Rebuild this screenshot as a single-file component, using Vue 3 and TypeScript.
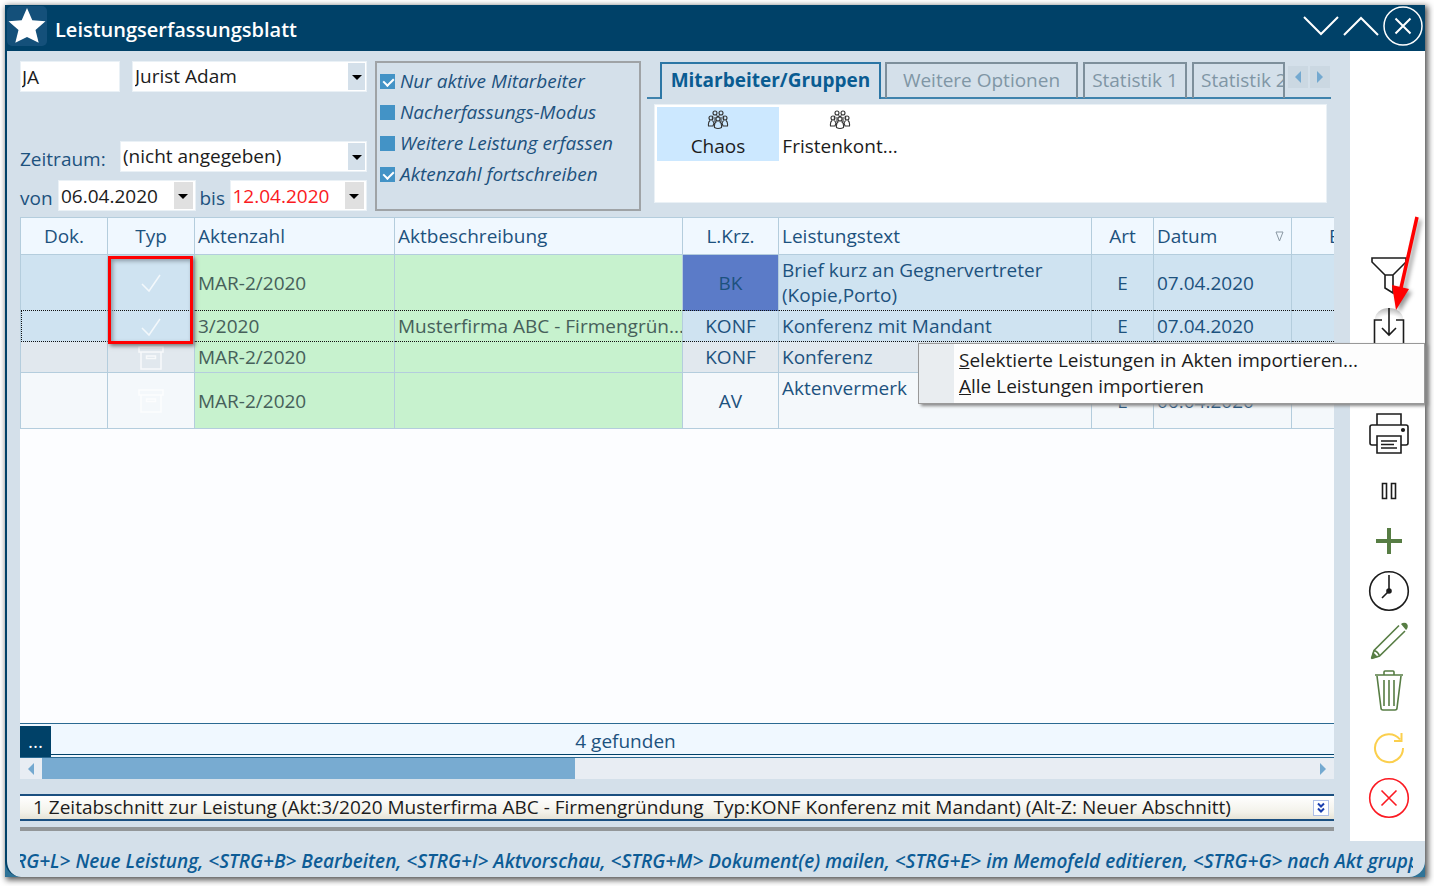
<script setup lang="ts">
import { ref } from 'vue'

interface Option { label: string; on: boolean }
interface Row {
  state: 'selected' | 'focused' | 'alt' | 'plain'
  typ: 'check' | 'box'
  akt: string
  text: string
  desc: string
  krz: string
  date: string
}

const kuerzel = ref('JA')
const person = ref('Jurist Adam')
const zeitraum = ref('(nicht angegeben)')
const von = ref('06.04.2020')
const bis = ref('12.04.2020')

const options = ref<Option[]>([
  { label: 'Nur aktive Mitarbeiter', on: true },
  { label: 'Nacherfassungs-Modus', on: false },
  { label: 'Weitere Leistung erfassen', on: false },
  { label: 'Aktenzahl fortschreiben', on: true },
])

const groups = ['Chaos', 'Fristenkont...']
const activeGroup = ref('Chaos')

const rows: Row[] = [
  { state: 'selected', typ: 'check', akt: 'MAR-2/2020', desc: '', krz: 'BK', text: 'Brief kurz an Gegnervertreter (Kopie,Porto)', date: '07.04.2020' },
  { state: 'focused', typ: 'check', akt: '3/2020', desc: 'Musterfirma ABC - Firmengrün...', krz: 'KONF', text: 'Konferenz mit Mandant', date: '07.04.2020' },
  { state: 'alt', typ: 'box', akt: 'MAR-2/2020', desc: '', krz: 'KONF', text: 'Konferenz', date: '06.04.2020' },
  { state: 'plain', typ: 'box', akt: 'MAR-2/2020', desc: '', krz: 'AV', text: 'Aktenvermerk', date: '06.04.2020' },
]
</script>

<template>
  <div class="window">
    <header class="titlebar">
      <span class="logo">
        <svg viewBox="0 0 40 40" width="40" height="40" aria-hidden="true">
          <path d="M20 2l5.3 12.2 13.2 1.1-10 8.7 3.2 12.8L20 31l-11.7 5.8L11.500 24l-10-8.700 13.200-1.100z" fill="#fff" />
        </svg>
      </span>
      <h1>Leistungserfassungsblatt</h1>
      <div class="win-buttons">
        <button type="button" aria-label="Minimieren">
          <svg viewBox="0 0 36 20" width="36" height="20"><path d="M1 1l17 17L35 1" /></svg>
        </button>
        <button type="button" aria-label="Maximieren">
          <svg viewBox="0 0 36 20" width="36" height="20"><path d="M1 19L18 2l17 17" /></svg>
        </button>
        <button type="button" aria-label="Schließen">
          <svg viewBox="0 0 40 40" width="40" height="40"><circle cx="20" cy="20" r="19" /><path d="M12.500 12.500l15 15M27.500 12.500l-15 15" /></svg>
        </button>
      </div>
    </header>

    <div class="body">
      <main class="main">
        <section class="top">
          <form class="filters" @submit.prevent>
            <div class="line first">
              <input v-model="kuerzel" class="field short" type="text" aria-label="Kürzel" />
              <div class="combo">
                <select v-model="person" class="field" aria-label="Mitarbeiter"><option>Jurist Adam</option></select>
                <span class="drop"></span>
              </div>
            </div>
            <div class="line">
              <label for="zeitraum" class="wide">Zeitraum:</label>
              <div class="combo">
                <select id="zeitraum" v-model="zeitraum" class="field"><option>(nicht angegeben)</option></select>
                <span class="drop"></span>
              </div>
            </div>
            <div class="line">
              <label for="von" class="von">von</label>
              <div class="combo">
                <input id="von" v-model="von" class="field" type="text" />
                <button type="button" class="drop grey" aria-label="Kalender von"></button>
              </div>
              <label for="bis" class="bis">bis</label>
              <div class="combo">
                <input id="bis" v-model="bis" class="field red" type="text" />
                <button type="button" class="drop grey" aria-label="Kalender bis"></button>
              </div>
            </div>
          </form>

          <fieldset class="options">
            <label v-for="o in options" :key="o.label">
              <input v-model="o.on" type="checkbox" /><span>{{ o.label }}</span>
            </label>
          </fieldset>

          <section class="tabs">
            <div class="tablist" role="tablist">
              <button type="button" role="tab" class="tab active" aria-selected="true">Mitarbeiter/Gruppen</button>
              <button type="button" role="tab" class="tab t2">Weitere Optionen</button>
              <button type="button" role="tab" class="tab t3">Statistik 1</button>
              <button type="button" role="tab" class="tab t4">Statistik 2</button>
              <span class="scrollers">
                <button type="button" aria-label="Zurück"><i class="tri left"></i></button>
                <button type="button" aria-label="Weiter"><i class="tri right"></i></button>
              </span>
            </div>
            <div class="groups">
              <button v-for="g in groups" :key="g" type="button" :class="{ on: g === activeGroup }" @click="activeGroup = g">
                <svg viewBox="0 0 22 20" width="22" height="20" aria-hidden="true">
                  <g fill="none" stroke="#333" stroke-width="1.100">
                    <circle cx="8" cy="3" r="2" /><circle cx="14" cy="3" r="2" />
                    <circle cx="4" cy="8" r="2" /><circle cx="18" cy="8" r="2" /><circle cx="11" cy="9" r="2" />
                    <path d="M6 6q-1 1-.5 3M9.500 5.500L11 7l1.500-1.500M16 6q1 1 .5 3M3 10.500Q1 12 1.500 16H6l1-3-1.500-2.500M19 10.500Q21 12 20.500 16H16l-1-3 1.500-2.500M9.500 11.500Q7 13 7.500 17.500q3.500 2 7 0Q15 13 12.500 11.500M8 7v5M14 7v5" />
                  </g>
                </svg>
                <span>{{ g }}</span>
              </button>
            </div>
          </section>
        </section>

        <section class="grid">
          <table>
            <colgroup>
              <col class="c-dok" /><col class="c-typ" /><col class="c-akt" /><col class="c-desc" /><col class="c-krz" />
              <col /><col class="c-art" /><col class="c-date" /><col class="c-end" />
            </colgroup>
            <thead>
              <tr>
                <th class="mid">Dok.</th><th class="mid">Typ</th><th>Aktenzahl</th><th>Aktbeschreibung</th>
                <th class="mid">L.Krz.</th><th>Leistungstext</th><th class="mid">Art</th>
                <th>
                  <span class="sort">Datum
                    <svg viewBox="0 0 9 11" width="9" height="11" aria-hidden="true"><path d="M1 1h7L4.500 10z" fill="none" stroke="#8a98a3" /></svg>
                  </span>
                </th>
                <th class="cut">E</th>
              </tr>
            </thead>
            <tbody>
              <tr v-for="(r, i) in rows" :key="i" :class="r.state">
                <td></td>
                <td class="mid">
                  <svg v-if="r.typ === 'check'" viewBox="0 0 24 22" width="24" height="22" aria-label="erledigt"><path d="M3 12l7 7L21 3" /></svg>
                  <svg v-else viewBox="0 0 26 24" width="26" height="24" aria-label="Archiv"><path d="M1 1h24v5H1zM3 6v17h20V6M8.500 10h9v2.500h-9z" /></svg>
                </td>
                <td class="green">{{ r.akt }}</td>
                <td class="green desc">{{ r.desc }}</td>
                <td class="mid krz">{{ r.krz }}</td>
                <td class="text">{{ r.text }}</td>
                <td class="mid">E</td>
                <td class="date">{{ r.date }}</td>
                <td></td>
              </tr>
            </tbody>
          </table>
          <div class="marker"></div>
        </section>

        <div class="status">
          <button type="button" class="more">...</button>
          <div class="count"><span>4 gefunden</span></div>
        </div>
        <div class="hscroll">
          <button type="button" aria-label="Nach links"><i class="tri left"></i></button>
          <div class="track"><div class="thumb"></div></div>
          <button type="button" aria-label="Nach rechts"><i class="tri right"></i></button>
        </div>

        <button type="button" class="accordion">
          <span>1 Zeitabschnitt zur Leistung (Akt:3/2020 Musterfirma ABC - Firmengründung&nbsp; Typ:KONF Konferenz mit Mandant) (Alt-Z: Neuer Abschnitt)</span>
          <svg viewBox="0 0 16 16" width="16" height="16" aria-hidden="true">
            <rect x=".5" y=".5" width="15" height="15" fill="#fff" stroke="#aebfe8" />
            <path d="M5 3.500l3 3 3-3M5 8.500l3 3 3-3" fill="none" stroke="#1a3fae" stroke-width="2" />
          </svg>
        </button>
        <div class="splitter"></div>
      </main>

      <nav class="tools" aria-label="Werkzeuge">
        <button type="button" aria-label="Filter">
          <svg viewBox="0 0 42 50" width="42" height="50"><path d="M4 7h34v4L25 24v18l-8-5V24L4 11zM17 24h8" /></svg>
        </button>
        <button type="button" aria-label="Importieren">
          <svg viewBox="0 0 42 50" width="42" height="50">
            <defs><radialGradient id="glow" cx=".5" cy="1" r="1"><stop offset=".3" stop-color="#fff" /><stop offset="1" stop-color="#b5b5b5" /></radialGradient></defs>
            <path d="M7 18a14 11 0 0 1 28 0z" fill="url(#glow)" stroke="none" />
            <path d="M14 19H6.500v29h29V19H28" /><path d="M21 7v27M14 27l7 7 7-7" />
          </svg>
        </button>
        <button type="button" class="after-menu" aria-label="Drucken">
          <svg viewBox="0 0 42 50" width="42" height="50">
            <path d="M9 16V5h24v11" /><path d="M9 36H4q-2 0-2-2V18q0-2 2-2h34q2 0 2 2v16q0 2-2 2h-5" />
            <path d="M9 27h24v17H9zM13 32h16M13 35.500h13M13 39h16" /><circle cx="35" cy="21" r="1.300" fill="#1c1c1c" />
          </svg>
        </button>
        <button type="button" class="gap" aria-label="Pause">
          <svg viewBox="0 0 42 50" width="42" height="50"><path d="M14.500 17.500h4v15h-4zM23.500 17.500h4v15h-4z" /></svg>
        </button>
        <button type="button" aria-label="Neu">
          <svg viewBox="0 0 42 50" width="42" height="50"><path d="M21 12v26M8 25h26" class="g thick" /></svg>
        </button>
        <button type="button" aria-label="Zeit">
          <svg viewBox="0 0 42 50" width="42" height="50"><circle cx="21" cy="25" r="19.300" /><path d="M21 9v16l-7 7" /><circle cx="21" cy="25" r="2" fill="#1c1c1c" /></svg>
        </button>
        <button type="button" aria-label="Bearbeiten">
          <svg viewBox="0 0 42 50" width="42" height="50">
            <path class="g" d="M3.500 42.500l2.500-8L31 9.500M3.500 42.500l8-2.500L37 15M6 34.500q4 1 5.500 5.500" />
            <path class="gf" d="M3 43l2-7 5 5zM33 8q2-2 5-1 3 2 1 6l-1 1z" />
          </svg>
        </button>
        <button type="button" aria-label="Löschen">
          <svg viewBox="0 0 42 50" width="42" height="50"><path class="g" d="M7 9h28M16 9V6q0-1 1-1h8q1 0 1 1v3M9 10l4 32q0 2 2 2h12q2 0 2-2l4-32M16 14v26M21 14v26M26 14v26" /></svg>
        </button>
        <button type="button" class="gap" aria-label="Aktualisieren">
          <svg viewBox="0 0 42 50" width="42" height="50"><path class="y" d="M35 25A14 14 0 1 1 32 16.500M33.500 10v8H26" /></svg>
        </button>
        <button type="button" aria-label="Abbrechen">
          <svg viewBox="0 0 42 50" width="42" height="50"><circle class="r" cx="21" cy="25" r="19.300" /><path class="r" d="M13.500 17.500l15 15M28.500 17.500l-15 15" /></svg>
        </button>
      </nav>
    </div>

    <footer class="hints">
      <p>RG+L&gt; Neue Leistung, &lt;STRG+B&gt; Bearbeiten, &lt;STRG+I&gt; Aktvorschau, &lt;STRG+M&gt; Dokument(e) mailen, &lt;STRG+E&gt; im Memofeld editieren, &lt;STRG+G&gt; nach Akt gruppieren</p>
    </footer>

    <div class="menu" role="menu">
      <button type="button" role="menuitem"><u>S</u>elektierte Leistungen in Akten importieren...</button>
      <button type="button" role="menuitem"><u>A</u>lle Leistungen importieren</button>
    </div>

    <svg class="arrow" viewBox="0 0 40 100" width="40" height="100" aria-hidden="true">
      <path d="M32 2L16 73" stroke="#f00" stroke-width="3.500" fill="none" />
      <path d="M7 70l17 4L11 95z" fill="#f00" />
    </svg>
  </div>
</template>

<style>
body { margin: 0; background: #fff; }
</style>

<style scoped>
* { box-sizing: border-box; }
.window {
  position: relative;
  display: flex;
  flex-direction: column;
  min-height: calc(100vh - 14px);
  margin: 5px 9px 9px 5px;
  background: #2f7397;
  box-shadow: 2px 2px 6px 1px #555;
  font-family: "Open Sans", sans-serif;
  font-size: 19px;
  line-height: 25px;
  color: #1d527e;
}
button, input, select { font: inherit; color: inherit; margin: 0; padding: 0; border: 0; border-radius: 0; background: none; }
svg { display: block; }

.titlebar { display: flex; align-items: center; height: 46px; padding: 0 2px; background: #004168; color: #fff; }
.logo { align-self: flex-start; width: 40px; height: 40px; margin-top: 1px; border-radius: 5px; background: #14507a; }
h1 { flex: 1; margin: 4px 0 0 8px; font-size: 20px; line-height: 28px; font-weight: 600; }
.win-buttons { display: flex; align-items: center; gap: 4px; align-self: flex-start; margin-top: 1px; }
.win-buttons svg { fill: none; stroke: #fff; stroke-width: 2; }
.win-buttons circle { stroke-width: 1.500; }

.body { flex: 1; display: flex; background: #d4e0ea; border-left: 2px solid #004168; }
.main { flex: 1; min-width: 0; display: flex; flex-direction: column; padding: 10px 16px 10px 13px; }
.top { display: flex; height: 156px; }

.filters { width: 347px; }
.line { display: flex; height: 31px; margin-bottom: 8px; }
.line.first { margin-bottom: 49px; gap: 12px; }
.line label { padding-top: 6px; }
.wide { width: 100px; }
.von { width: 38px; }
.bis { width: 34px; padding-left: 4px; }
.combo { position: relative; flex: 1; min-width: 0; }
.field { width: 100%; height: 31px; padding: 0 2px; background: #fff; border: 1px solid #eaf1f6; color: #1c1c1c; appearance: none; outline: 0; }
.field.short { width: 100px; padding: 0 1px; }
.field.red { color: #fb1a22; }
.combo .drop { position: absolute; top: 2px; right: 2px; width: 17px; height: 27px; background: #d4e0ea; pointer-events: none; }
.combo .grey { width: 19px; right: 3px; background: #e0e0e0; }
.drop::after { content: ""; position: absolute; left: 4px; top: 12px; border: 5px solid transparent; border-top-color: #000; border-bottom: 0; }

.options { width: 266px; height: 150px; margin: 0 0 0 8px; padding: 3px; border: 2px solid #9fa3a6; }
.options label { display: flex; align-items: center; gap: 5px; height: 31px; font-style: italic; white-space: nowrap; }
.options input { appearance: none; position: relative; width: 15px; height: 15px; background: #4393c6; }
.options input:checked::after { content: ""; position: absolute; left: 5px; top: 2px; width: 5px; height: 8px; border: solid #fff; border-width: 0 2px 2px 0; transform: rotate(45deg); }

.tabs { flex: 1; min-width: 0; margin-left: 6px; }
.tablist { position: relative; display: flex; height: 38px; margin-right: 3px; padding: 1px 0 0 13px; box-shadow: inset 0 -2px #3f83ad; }
.tab { height: 36px; border: 2px solid #7d8f9b; border-bottom: 0; color: #8096a5; white-space: nowrap; overflow: hidden; line-height: 30px; padding-bottom: 3px; }
.tab.active { width: 221px; height: 37px; margin-right: 4px; border-color: #2b76a5; background: #d4e0ea; color: #0a5c92; font-weight: 700; }
.t2 { width: 193px; margin-right: 5px; }
.t3 { width: 104px; margin-right: 5px; }
.t4 { width: 93px; padding-left: 7px; text-align: left; }
.scrollers { display: flex; gap: 2px; margin: 4px 0 0 3px; }
.scrollers button { display: flex; align-items: center; justify-content: center; width: 20px; height: 22px; background: #cbd8e2; }
.tri { border: 6px solid transparent; }
.tri.left { border-right-color: #74a9d0; border-left: 0; }
.tri.right { border-left-color: #74a9d0; border-right: 0; }
.groups { display: flex; align-items: flex-start; height: 99px; margin: 5px 7px 0 7px; padding: 2px; background: #fff; border: 1px solid #eaf1f6; }
.groups button { display: flex; flex-direction: column; align-items: center; width: 122px; height: 54px; padding-top: 3px; color: #1c1c1c; }
.groups button span { padding-top: 4px; }
.groups .on { background: #cce8ff; }

.grid { position: relative; flex: 1; background: #fcfdff; }
table { width: 100%; table-layout: fixed; border-collapse: separate; border-spacing: 0; border-left: 1px solid #b4cddd; }
.c-dok { width: 87px; }
.c-typ { width: 87px; }
.c-akt { width: 200px; }
.c-desc { width: 288px; }
.c-krz { width: 96px; }
.c-art { width: 62px; }
.c-date { width: 138px; }
.c-end { width: 42px; }
th, td { padding: 0 3px; border: solid #b4cddd; border-width: 0 1px 1px 0; text-align: left; font-weight: 400; overflow: hidden; white-space: nowrap; }
th { height: 38px; border-top-width: 1px; background: #f0f8ff; }
th:last-child, td:last-child { border-right: 0; }
th.cut { padding: 0 0 0 37px; }
td.desc { padding-right: 0; }
.mid { text-align: center; }
.sort { display: flex; align-items: center; justify-content: space-between; padding-right: 4px; }
td { height: 31px; padding-top: 1px; }
td svg { margin: 0 auto; fill: none; stroke: #fff; stroke-width: 1.500; opacity: .75; }
.selected td, .plain td { height: 56px; }
.selected td, .focused td { background: #cfe3f1; border-bottom: 1px dotted #111; }
.focused td:first-child { border-left: 1px dotted #111; }
.alt td { background: #e1e8ee; }
.plain td { background: #f4f8fb; }
tbody td.green { background: #c7f2ce; color: #46605a; }
.selected td.krz { background: #5b7bc8; }
td.text { white-space: normal; }
.plain td.text { vertical-align: top; padding-top: 3px; }
.marker { position: absolute; left: 88px; top: 39px; width: 85px; height: 88px; border: 3px solid #f00; box-shadow: 2px 2px 4px #777, inset 2px 2px 4px #8a9aa5; }

.status { display: flex; height: 34px; border-top: 1px solid #2b6a92; background: #f0f8ff; }
.more { width: 31px; margin-top: 2px; background: #004168; color: #fff; }
.count { flex: 1; border-bottom: 1px solid #004168; margin-bottom: 2px; padding-right: 134px; text-align: center; }
.count span { display: block; padding-top: 5px; }
.hscroll { display: flex; height: 22px; border-top: 1px solid #2b6a92; background: #e8edf3; }
.hscroll button { display: flex; align-items: center; justify-content: center; width: 22px; }
.track { flex: 1; }
.thumb { width: 42%; height: 21px; background: #78abd1; }
.accordion { display: flex; align-items: center; justify-content: space-between; height: 27px; margin: 15px 0 6px; padding: 0 5px 0 13px; border: solid #1a4f80; border-width: 2px 0; background: linear-gradient(#fff, #f3f2ea 70%, #e6e3d6); color: #1c1c1c; white-space: nowrap; }
.splitter { height: 4px; background: #939799; }

.tools { display: flex; flex-direction: column; align-items: center; justify-content: flex-end; width: 75px; padding: 0 0 18px 3px; background: #fff; }
.tools button { flex: none; }
.tools svg { fill: none; stroke: #1c1c1c; stroke-width: 1.600; }
.tools .after-menu { margin-top: 58px; }
.tools .gap { margin-top: 7px; }
.tools .g { stroke: #577d44; }
.tools .thick { stroke-width: 4; }
.tools .gf { fill: #577d44; stroke: none; }
.tools .y { stroke: #fbcf4d; stroke-width: 2; }
.tools .r { stroke: #fb1a22; }

.hints { height: 36px; padding: 8px 12px 0 13px; border-left: 2px solid #004168; border-radius: 0 0 16px 16px; background: #d4e0ea; }
.hints p { margin: 0; overflow: hidden; white-space: nowrap; text-indent: -5px; font-style: italic; font-weight: 600; color: #0d5c96; }

.menu { position: absolute; top: 338px; right: 0; width: 507px; padding: 3px 1px 4px 1px; border: 1px solid #999; background: linear-gradient(90deg, #e9edf0 35px, #fdfdfd 35px); box-shadow: 3px 2px 3px #888; color: #1c1c1c; }
.menu button { display: block; width: 100%; height: 26px; padding-left: 39px; text-align: left; line-height: 26px; }
.arrow { position: absolute; top: 210px; right: 0; filter: drop-shadow(3px 3px 2px #999); }
</style>
